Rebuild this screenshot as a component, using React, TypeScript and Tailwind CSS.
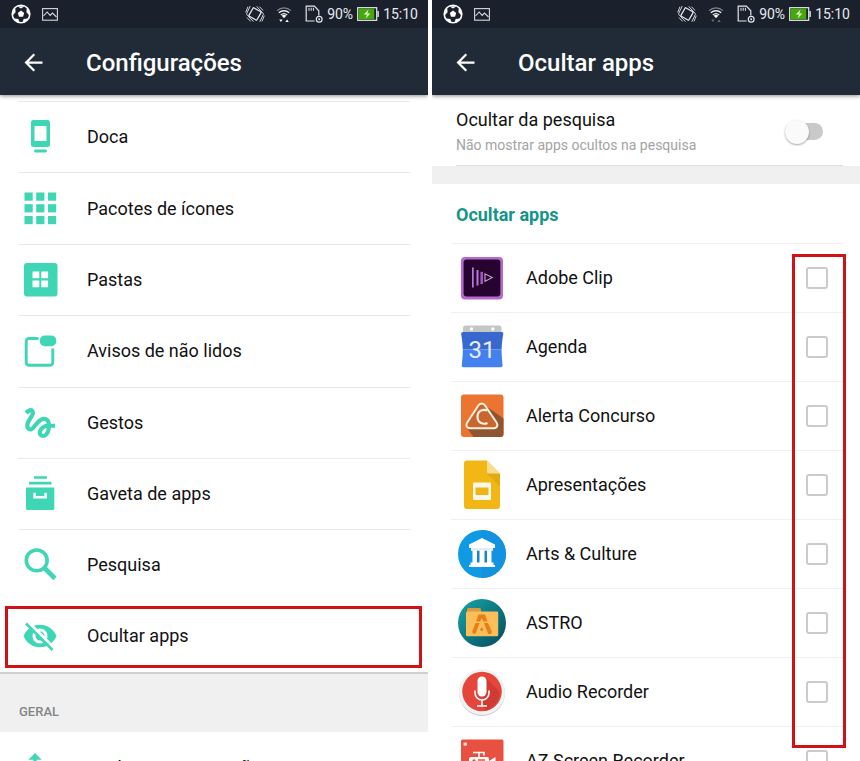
import React, { useState } from "react";
import {
  MdArrowBack,
  MdGesture,
  MdImportExport,
  MdVisibilityOff,
} from "react-icons/md";

type Item = {
  label: string;
  icon: React.ReactNode;
};

const BallIcon = () => (
  <svg width="20" height="20" viewBox="0 0 20 20" aria-hidden="true">
    <circle cx="10" cy="10" r="8.8" fill="none" stroke="#fff" strokeWidth="1.6" />
    <path d="M10 6.6l3.2 2.4-1.2 3.8H8L6.8 9z" fill="#fff" />
    <path
      d="M6.4 2.2h7.2L10 4.6zM1.6 7.4l2.6-3.6.4 4.4-2.8 3zM18.4 7.4l-2.6-3.6-.4 4.4 2.8 3zM3.4 14.4l4 .6 1 3.6-3-.8zM16.6 14.4l-4 .6-1 3.6 3-.8z"
      fill="#fff"
    />
  </svg>
);

const PictureIcon = () => (
  <svg width="16" height="13" viewBox="0 0 16 13" fill="none" aria-hidden="true">
    <rect x="0.6" y="0.6" width="14.8" height="11.6" stroke="#d5d9de" strokeWidth="1.1" />
    <path d="M1.5 8l3.6-4 3 3.4L10.5 5l4 4" stroke="#d5d9de" strokeWidth="1.1" />
  </svg>
);

const VibrateIcon = () => (
  <svg width="20" height="18" viewBox="0 0 20 18" fill="none" stroke="#e3e6ea" aria-hidden="true">
    <rect
      x="5.4"
      y="4.2"
      width="9.2"
      height="9.6"
      rx="0.8"
      strokeWidth="1.3"
      transform="rotate(30 10 9)"
    />
    <path
      d="M5.2 1.2L1.8 8.2a1.5 1.5 0 00.4 1.8l6.2 6.6M3 1.6L.7 7.4M2 12.6l3.6 3.8M14.8 16.800l3.4-7a1.5 1.5 0 00-.4-1.8L11.6 1.4M17 16.4l2.3-5.8M18 5.4l-3.6-3.8"
      strokeWidth="0.9"
    />
  </svg>
);

const WifiIcon = ({ dim }: { dim?: boolean }) => (
  <svg width="16" height="17" viewBox="0 0 16 17" fill="none" aria-hidden="true">
    <path d="M1 4.6a10.4 10.4 0 0114 0" stroke="#7d858f" strokeWidth="1.2" />
    <path d="M2.8 6.8a7.6 7.6 0 0110.4 0M4.8 9a4.8 4.8 0 016.4 0" stroke="#e8ebee" strokeWidth="1.3" />
    <path d="M5.8 9.8a3.2 3.2 0 014.4 0L8 12.2z" fill="#fff" />
    <path
      d="M3.2 13.4h3.4L4.9 16zM9.4 16h3.4l-1.7-2.6z"
      fill={dim ? "#68707b" : "#fff"}
    />
  </svg>
);

const SimIcon = () => (
  <svg width="18" height="18" viewBox="0 0 18 18" fill="none" aria-hidden="true">
    <path d="M9.6 16H1.2V1.2h8.2l4.4 4.6v4.6" stroke="#e3e6ea" strokeWidth="1.2" />
    <path d="M4 2.8v3M6.2 2.8v3M8.4 2.8v3" stroke="#e3e6ea" strokeWidth="1" />
    <circle cx="14.2" cy="14.2" r="2.9" stroke="#e3e6ea" strokeWidth="1.2" />
    <circle cx="14.2" cy="14.2" r="1" fill="#e3e6ea" />
  </svg>
);

const BatteryIcon = () => (
  <svg width="22" height="14" viewBox="0 0 22 14" aria-hidden="true">
    <rect x="0.7" y="0.7" width="19" height="12.6" fill="#1b222d" stroke="#e8ebee" strokeWidth="1.2" />
    <rect x="1.6" y="1.6" width="15.6" height="10.8" fill="#47a80a" />
    <rect x="20.4" y="4" width="1.4" height="6" fill="#e8ebee" />
    <path d="M11.6 2.6L6.8 7.6h3.2L8.6 11.4l4.8-5h-3.2z" fill="#e9f7d8" />
  </svg>
);

const StatusBar = ({ dimWifi }: { dimWifi?: boolean }) => (
  <div className="flex h-7 items-center bg-[#1a202c] pl-[11px] pr-[10px] text-sm text-[#e8ebee]">
    <BallIcon />
    <span className="ml-[11px]">
      <PictureIcon />
    </span>
    <span className="ml-auto">
      <VibrateIcon />
    </span>
    <span className="ml-[11px]">
      <WifiIcon dim={dimWifi} />
    </span>
    <span className="ml-[13px]">
      <SimIcon />
    </span>
    <span className="ml-1">90%</span>
    <span className="ml-1">
      <BatteryIcon />
    </span>
    <span className="ml-1">15:10</span>
  </div>
);

const AppBar = ({ title, dimWifi }: { title: string; dimWifi?: boolean }) => (
  <header className="relative z-10 shrink-0 shadow-[0_1px_4px_rgba(0,0,0,0.45)]">
    <StatusBar dimWifi={dimWifi} />
    <div className="flex h-[67px] items-center gap-[39px] bg-[#212b38] pl-5 pt-[2px] text-white">
      <button type="button" aria-label="Voltar">
        <MdArrowBack size={27} />
      </button>
      <h1 className="text-2xl font-medium">{title}</h1>
    </div>
  </header>
);

const DockIcon = () => (
  <svg width="40" height="40" viewBox="0 0 40 40" fill="currentColor" aria-hidden="true">
    <path
      fillRule="evenodd"
      d="M13.5 3h14A2.5 2.5 0 0130 5.5v22a2.5 2.5 0 01-2.5 2.5h-14a2.5 2.5 0 01-2.5-2.5v-22A2.5 2.5 0 0113.5 3zM14.5 9v15h12V9z"
    />
    <rect x="14" y="32.5" width="13" height="3" rx="1.5" />
  </svg>
);

const GridIcon = () => (
  <svg width="40" height="40" viewBox="0 0 40 40" fill="currentColor" aria-hidden="true">
    {[4.5, 16.2, 28].map((y) =>
      [4.5, 16.2, 28].map((x) => (
        <rect key={`${x}-${y}`} x={x} y={y - 1} width="8.2" height="8.2" />
      ))
    )}
  </svg>
);

const FolderIcon = () => (
  <svg width="40" height="40" viewBox="0 0 40 40" aria-hidden="true">
    <rect x="4" y="3" width="33.5" height="33.5" rx="3" fill="currentColor" />
    <path
      d="M12.5 11.5h6.8v6.8h-6.8zM21.3 11.5h6.8v6.8h-6.8zM12.5 20.5h6.8v6.8h-6.8zM21.3 20.5h6.8v6.8h-6.8z"
      fill="#fff"
    />
  </svg>
);

const BadgeIcon = () => (
  <svg width="40" height="40" viewBox="0 0 40 40" fill="none" aria-hidden="true">
    <path
      d="M18.5 7.5H9a2.8 2.8 0 00-2.8 2.8V31.5a2.8 2.8 0 002.8 2.8h21a2.8 2.8 0 002.8-2.8V17.5"
      stroke="currentColor"
      strokeWidth="2.9"
    />
    <rect x="19.8" y="4.5" width="16.5" height="10.8" rx="5" fill="currentColor" />
  </svg>
);

const DrawerIcon = () => (
  <svg width="40" height="40" viewBox="0 0 40 40" aria-hidden="true">
    <path
      d="M14 2.3h13v2.5H14zM9 7.8h22.5v2.7H9zM6 13.5h28.3v21a1.5 1.5 0 01-1.5 1.5H7.5A1.5 1.5 0 016 34.5z"
      fill="currentColor"
    />
    <path d="M14.6 18.7v4.5h11v-4.5" fill="none" stroke="#fff" strokeWidth="2.6" />
  </svg>
);

const SearchIcon = () => (
  <svg width="40" height="40" viewBox="0 0 40 40" fill="none" stroke="currentColor" aria-hidden="true">
    <circle cx="16.7" cy="15.4" r="10.4" strokeWidth="3.6" />
    <path d="M24.5 23l10.5 10.5" strokeWidth="4.6" />
  </svg>
);

const AdobeClipIcon = () => (
  <svg width="48" height="48" viewBox="0 0 48 48" aria-hidden="true">
    <rect x="3" y="3" width="42" height="42.5" rx="4" fill="#b768cf" />
    <rect x="5.6" y="5.6" width="36.8" height="37" rx="3" fill="#26042f" />
    <path d="M14 13.5h1.7v20H14zM18.5 16h2v15.5h-2z" fill="#b879d8" />
    <path d="M22.4 17.8h2.6v12.2h-2.6z" fill="#9c55c4" />
    <path d="M27 19.8v7.6l7.2-3.8z" fill="none" stroke="#cba9c9" strokeWidth="1.1" />
  </svg>
);

const CalendarIcon = () => (
  <svg width="48" height="48" viewBox="0 0 48 48" aria-hidden="true">
    <path d="M7.5 2.5h33.5a2.5 2.5 0 012.5 2.5v6H5V5a2.5 2.5 0 012.5-2.5z" fill="#c3c5c7" />
    <circle cx="13.5" cy="6" r="1.7" fill="#fff" />
    <circle cx="34.8" cy="6" r="1.7" fill="#fff" />
    <path d="M5 9h38.5a1.8 1.8 0 011.7 2.3c-.8 5-1.4 9-1.6 15.2H4.8c-.2-6.2-.8-10.2-1.6-15.2A1.8 1.8 0 015 9z" fill="#3868cd" />
    <path d="M4.8 26.5h38.8c0 6 .5 10.5.9 15a2.2 2.2 0 01-2 2.700H5.800a2.2 2.2 0 01-2-2.7c.5-4.5 1-9 1-15z" fill="#4480ee" />
    <text x="24" y="35" textAnchor="middle" fill="#e6effc" className="text-[24px]">
      31
    </text>
  </svg>
);

const AlertaIcon = () => (
  <svg width="48" height="48" viewBox="0 0 48 48" aria-hidden="true">
    <rect x="3" y="2.5" width="42.5" height="42.5" rx="3" fill="#ec7431" />
    <path d="M28 14l17.5 12.5V42a3 3 0 01-3 3h-27L8.5 35.5h31z" fill="#8f5430" />
    <path
      d="M20.3 13.5c1.6-2.7 5.2-2.7 6.8 0l11.6 17.2c1.6 2.6.1 5.6-2.9 5.6H12c-3 0-4.5-3-2.9-5.6z"
      fill="#c9662f"
      stroke="#fdf0dd"
      strokeWidth="2"
    />
    <path
      d="M29.5 18.5c-3.5-1.5-10-.8-10 6.2s6.5 8 10 6.2"
      fill="none"
      stroke="#fdf0dd"
      strokeWidth="2.2"
    />
  </svg>
);

const SlidesIcon = () => (
  <svg width="48" height="50" viewBox="0 0 48 50" aria-hidden="true">
    <path d="M9 .5h20L42 13.5v32.5a3 3 0 01-3 3H9a3 3 0 01-3-3V3.5a3 3 0 013-3z" fill="#f2b714" />
    <path d="M29 13.5l13 13v-13z" fill="#e3a910" />
    <path d="M29 .5l13 13H30.5a1.5 1.5 0 01-1.5-1.5z" fill="#f9dd8d" />
    <rect x="15" y="22.5" width="18" height="17.5" rx="1" fill="#fdf8ea" />
    <path d="M17.5 27.5h13v7.5h-13z" fill="#efb418" />
  </svg>
);

const ArtsIcon = () => (
  <svg width="48" height="48" viewBox="0 0 48 48" aria-hidden="true">
    <circle cx="24" cy="24" r="24" fill="#0f9ae4" />
    <path d="M24 0a24 24 0 010 48z" fill="#1292df" />
    <path
      d="M24 8l13 6.5v3.5h-2v2.5h-1.5v12h2v2.5h1.5v2H11v-2h1.5v-2.5h2v-12H13V18h-2v-3.5z"
      fill="#fff"
    />
    <path d="M19 20.5h2.5v12H19zM26.5 20.5H29v12h-2.5z" fill="#1187cf" />
    <path d="M13 18h22v2.5H13z" fill="#e6eef4" />
  </svg>
);

const AstroIcon = () => (
  <svg width="48" height="48" viewBox="0 0 48 48" aria-hidden="true">
    <defs>
      <linearGradient id="astro" x1="0" y1="0" x2="1" y2="1">
        <stop offset="0" stopColor="#17a7a6" />
        <stop offset="1" stopColor="#044a5e" />
      </linearGradient>
    </defs>
    <circle cx="24" cy="24" r="24" fill="url(#astro)" />
    <path d="M10.5 9h11a1.5 1.5 0 011.5 1.5V14H9v-3.5A1.5 1.5 0 0110.5 9z" fill="#d99a42" />
    <path d="M9.5 12.5H39a1.2 1.2 0 011.2 1.2V36a1.2 1.2 0 01-1.2 1.2H9A1.2 1.2 0 018 36V14a1.5 1.5 0 011.5-1.5z" fill="#fcbe58" />
    <path d="M20.5 15.5h6.5l2.5 7h-4.2L23.7 19l-1.5 3.5H18zM17.5 24h4l-3.8 10.5h-3l-.5-2zM26 24h4l4 9-1 2h-2.8zM23.7 28.5l1.8 2-1.8 1.7-1.8-1.7z" fill="#e67f17" />
  </svg>
);

const MicIcon = () => (
  <svg width="48" height="48" viewBox="0 0 48 48" aria-hidden="true">
    <circle cx="24" cy="25" r="23" fill="#c9cdd0" />
    <circle cx="24" cy="24" r="23" fill="#f1f3f4" />
    <circle cx="24" cy="23.5" r="19.8" fill="#e5453b" />
    <path d="M28 10l13.5 13.5A19.8 19.8 0 0129 42.5l-5-4.5z" fill="#d03c34" />
    <rect x="19.5" y="8.5" width="9" height="20" rx="4.5" fill="#fff" />
    <path d="M17 22.5v2.5a7 7 0 0014 0v-2.5M24 32v6M19 38h10" fill="none" stroke="#fff" strokeWidth="1.5" />
  </svg>
);

const RecorderIcon = () => (
  <svg width="48" height="48" viewBox="0 0 48 48" aria-hidden="true">
    <rect x="3" y="2.5" width="42.5" height="43" rx="1.5" fill="#e8503f" />
    <rect x="5.5" y="5.5" width="3.5" height="3.2" rx="1" fill="#fbd9d3" />
    <path d="M15 15.5h11v3M21 15v5" fill="none" stroke="#fff" strokeWidth="1.5" />
    <path d="M13 20h16a2 2 0 012 2v2l6.5-4v16L31 32v3a2 2 0 01-2 2H13a2 2 0 01-2-2V22a2 2 0 012-2z" fill="#fff" />
    <circle cx="16" cy="24" r="1.7" fill="#e8503f" />
    <path d="M20 23h7" stroke="#e8503f" strokeWidth="1.5" />
  </svg>
);

const settings: Item[] = [
  { label: "Doca", icon: <DockIcon /> },
  { label: "Pacotes de ícones", icon: <GridIcon /> },
  { label: "Pastas", icon: <FolderIcon /> },
  { label: "Avisos de não lidos", icon: <BadgeIcon /> },
  { label: "Gestos", icon: <MdGesture size={44} /> },
  { label: "Gaveta de apps", icon: <DrawerIcon /> },
  { label: "Pesquisa", icon: <SearchIcon /> },
  { label: "Ocultar apps", icon: <MdVisibilityOff size={36} /> },
];

const apps: Item[] = [
  { label: "Adobe Clip", icon: <AdobeClipIcon /> },
  { label: "Agenda", icon: <CalendarIcon /> },
  { label: "Alerta Concurso", icon: <AlertaIcon /> },
  { label: "Apresentações", icon: <SlidesIcon /> },
  { label: "Arts & Culture", icon: <ArtsIcon /> },
  { label: "ASTRO", icon: <AstroIcon /> },
  { label: "Audio Recorder", icon: <MicIcon /> },
  { label: "AZ Screen Recorder", icon: <RecorderIcon /> },
];

const SettingButton = ({ label, icon }: Item) => (
  <button
    type="button"
    className="flex h-full w-full items-center gap-[27px] pl-[2px] text-left text-lg text-[#111111]"
  >
    <span className="flex size-10 shrink-0 items-center justify-center text-[#3ed6b5]">
      {icon}
    </span>
    {label}
  </button>
);

const SettingsScreen = () => (
  <section className="flex min-w-0 flex-col overflow-hidden bg-white">
    <AppBar title="Configurações" />

    <div className="relative shrink-0 pt-[6px]">
      <ul className="mx-[18px] grid h-[571px] auto-rows-fr">
        {settings.map((item, index) => (
          <li
            key={item.label}
            className={
              index === settings.length - 1 ? "" : "border-t border-[#e9e9e9]"
            }
          >
            <SettingButton {...item} />
          </li>
        ))}
      </ul>
      <div className="pointer-events-none absolute bottom-1 left-[5px] right-[6px] h-[62px] border-3 border-[#d01216]" />
    </div>

    <h2 className="flex h-[60px] shrink-0 items-end border-t-2 border-[#cfcfcf] bg-[#f0f0f0] px-[19px] pb-[11px] text-[13px] font-medium text-[#858585]">
      GERAL
    </h2>
    <div className="mx-[18px] h-[71px] shrink-0">
      <SettingButton
        label="Backup e restauração"
        icon={<MdImportExport size={40} />}
      />
    </div>
  </section>
);

const HideAppsScreen = () => {
  const [hideFromSearch, setHideFromSearch] = useState(false);
  const [hidden, setHidden] = useState<string[]>([]);

  const toggleApp = (label: string) => {
    setHidden((prev) =>
      prev.includes(label) ? prev.filter((a) => a !== label) : [...prev, label]
    );
  };

  return (
    <section className="flex min-w-0 flex-col overflow-hidden bg-white">
      <AppBar title="Ocultar apps" dimWifi />

      <label className="ml-6 mr-[17px] flex h-[71px] shrink-0 items-center justify-between border-b border-[#dedede] pr-5 pt-[3px]">
        <span className="flex flex-col">
          <span className="text-lg leading-[26px] text-[#111111]">
            Ocultar da pesquisa
          </span>
          <span className="text-sm leading-6 text-[#a3a3a3]">
            Não mostrar apps ocultos na pesquisa
          </span>
        </span>
        <input
          type="checkbox"
          role="switch"
          checked={hideFromSearch}
          onChange={() => setHideFromSearch(!hideFromSearch)}
          className="flex h-[17px] w-[38px] appearance-none items-center rounded-full bg-[#c9c9c9] before:size-6 before:rounded-full before:bg-[#fafafa] before:shadow-[0_1px_2px_rgba(0,0,0,0.35)] checked:justify-end checked:bg-[#8fd8cc]"
        />
      </label>
      <div className="h-[18px] shrink-0 bg-[#f0f0f0]" />

      <h2 className="flex h-[59px] shrink-0 items-center px-6 pt-[2px] text-lg font-bold text-[#159588]">
        Ocultar apps
      </h2>

      <div className="relative shrink-0">
        <ul className="ml-[19px] mr-[17px]">
          {apps.map((app) => (
            <li key={app.label} className="h-[69px] border-t border-[#f0f0f0]">
              <label className="flex h-full items-center gap-5 pl-[7px] pr-[15px] text-lg text-[#111111]">
                <span className="flex w-12 shrink-0 justify-center">
                  {app.icon}
                </span>
                <span className="flex-1">{app.label}</span>
                <input
                  type="checkbox"
                  checked={hidden.includes(app.label)}
                  onChange={() => toggleApp(app.label)}
                  className="size-[22px] appearance-none rounded-[3px] border-2 border-[#cbcbcb] bg-white checked:border-[#159588] checked:bg-[#159588]"
                />
              </label>
            </li>
          ))}
        </ul>
        <div className="pointer-events-none absolute right-[14px] top-[11px] h-[494px] w-[54px] border-3 border-[#d01216]" />
      </div>
    </section>
  );
};

export default function App() {
  return (
    <main className="grid h-screen grid-cols-2 gap-1 overflow-hidden bg-white font-[Roboto,sans-serif]">
      <SettingsScreen />
      <HideAppsScreen />
    </main>
  );
}
